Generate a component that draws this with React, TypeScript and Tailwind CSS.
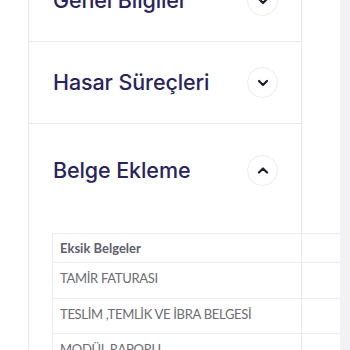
import React from "react";

const Chevron = ({ up }: { up?: boolean }) => (
  <div className="w-[31px] h-[31px] rounded-full border border-[#ececec] bg-white flex items-center justify-center shrink-0">
    <svg width="12" height="8" viewBox="0 0 12 8" fill="none">
      {up ? (
        <path d="M2 6.5L6 2.5L10 6.5" stroke="#1f1f2a" strokeWidth="2.2" strokeLinecap="round" strokeLinejoin="round" />
      ) : (
        <path d="M2 2L6 6L10 2" stroke="#1f1f2a" strokeWidth="2.2" strokeLinecap="round" strokeLinejoin="round" />
      )}
    </svg>
  </div>
);

const titleFont = { fontFamily: "Inter, Lato, sans-serif" };

export default function App() {
  const rows = ["TAMİR FATURASI", "TESLİM ,TEMLİK VE İBRA BELGESİ", "MODÜL RAPORU"];
  return (
    <div className="w-[350px] h-[350px] overflow-hidden bg-white flex" style={{ fontFamily: "Lato, 'Open Sans', sans-serif" }}>
      <div className="w-[28px] shrink-0" />
      <div className="w-[274px] shrink-0 border-x border-[#e9e9ec] flex flex-col -mt-[40px]">
        <div className="h-[82px] border-b border-[#e9e9ec] flex items-center justify-between pl-[24px] pr-[23px] shrink-0">
          <span className="text-[21.5px] text-[#29245c] font-medium tracking-[-0.1px]" style={titleFont}>Genel Bilgiler</span>
          <Chevron />
        </div>
        <div className="h-[82px] border-b border-[#e9e9ec] flex items-center justify-between pl-[24px] pr-[23px] shrink-0">
          <span className="text-[21.5px] text-[#29245c] font-medium tracking-[-0.1px]" style={titleFont}>Hasar Süreçleri</span>
          <Chevron />
        </div>
        <div className="flex flex-col">
          <div className="h-[92px] flex items-center justify-between pl-[24px] pr-[23px]">
            <span className="text-[21.5px] text-[#29245c] font-medium tracking-[-0.1px]" style={titleFont}>Belge Ekleme</span>
            <Chevron up />
          </div>
          <div className="mt-[17px] ml-[23px] w-[288px] border-l border-t border-[#ececee] relative z-0">
            <div className="h-[29px] border-b border-[#ececee] flex items-center pl-[7px] pt-[1px]">
              <span className="text-[13px] font-bold text-[#5e5c6e]">Eksik Belgeler</span>
            </div>
            {rows.map((r) => (
              <div key={r} className="h-[35.5px] border-b border-[#ececee] flex items-center pl-[7px] pb-[3px]">
                <span className="text-[13px] text-[#6c6c72] tracking-[-0.3px]">{r}</span>
              </div>
            ))}
          </div>
        </div>
      </div>
      <div className="w-[38px] shrink-0" />
      <div className="flex-1 bg-[#f2f2f5] relative z-10" />
    </div>
  );
}
